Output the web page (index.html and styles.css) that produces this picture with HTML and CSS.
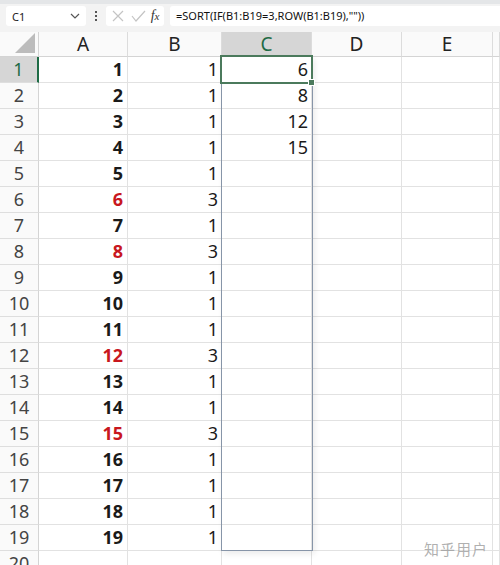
FILE: index.html
```html
<!DOCTYPE html>
<html lang="en">
<head>
    <meta charset="UTF-8">
    <title>Sheet</title>
    <link rel="stylesheet" href="styles.css">
</head>
<body>
    <div class="topstrip"></div>
    <div class="formulabar">
        <div class="namebox">
            <span>C1</span>
            <svg class="chev" width="10" height="6" viewBox="0 0 10 6"><path d="M1 1l4 4 4-4" fill="none" stroke="#555" stroke-width="1.2"/></svg>
        </div>
        <div class="dots"><i></i><i></i><i></i></div>
        <div class="btns">
            <svg width="14" height="14" viewBox="0 0 14 14"><path d="M2 2l10 10M12 2L2 12" stroke="#c4c4c4" stroke-width="1.2"/></svg>
            <svg width="16" height="14" viewBox="0 0 16 14"><path d="M2 7l4 5 9-10" fill="none" stroke="#c4c4c4" stroke-width="1.2"/></svg>
            <span class="fx"><i>f</i><i>x</i></span>
        </div>
        <div class="formula">=SORT(IF(B1:B19=3,ROW(B1:B19),""))</div>
    </div>

    <div class="sheet">
        <div class="grid" id="grid">
            <div class="corner"><span></span></div>
            <div class="colhead">A</div>
            <div class="colhead">B</div>
            <div class="colhead active">C</div>
            <div class="colhead">D</div>
            <div class="colhead">E</div>
            <div class="colhead last"></div>
        </div>
        <div class="range"></div>
        <div class="selected"><span class="handle"></span></div>
        <div class="watermark">知乎用户</div>
    </div>

    <script>
        var aRed = [6, 8, 12, 15];
        var cVals = [6, 8, 12, 15];
        var grid = document.getElementById("grid");
        var html = "";
        for (var r = 1; r <= 20; r++) {
            var red = aRed.indexOf(r) >= 0;
            html += '<div class="rowhead' + (r === 1 ? ' active' : '') + '">' + r + '</div>';
            html += '<div class="cell bold' + (red ? ' red' : '') + '">' + (r < 20 ? r : '') + '</div>';
            html += '<div class="cell">' + (r < 20 ? (red ? 3 : 1) : '') + '</div>';
            html += '<div class="cell">' + (r <= 4 ? cVals[r - 1] : '') + '</div>';
            html += '<div class="cell"></div><div class="cell"></div><div class="cell last"></div>';
        }
        grid.innerHTML += html;
    </script>
</body>
</html>
```

FILE: styles.css
```css
body {
    margin: 0;
    width: 500px;
    height: 565px;
    overflow: hidden;
    background: #fff;
    font-family: "Noto Sans", "Open Sans", sans-serif;
    color: #111;
}

.topstrip {
    height: 4px;
    background: #e4e6e8;
}

.formulabar {
    display: flex;
    align-items: center;
    height: 28px;
    padding: 0 0 4px 6px;
    box-sizing: border-box;
    background: #f3f3f3;
    gap: 6px;
}

.namebox {
    width: 80px;
    height: 20px;
    background: #fff;
    border-radius: 3px;
    display: flex;
    align-items: center;
    justify-content: space-between;
    padding: 0 6px 0 6px;
    box-sizing: border-box;
    font-size: 11px;
    color: #222;
}

.dots {
    display: flex;
    flex-direction: column;
    gap: 2px;
    padding: 0 3px;
}

.dots i {
    width: 2px;
    height: 2px;
    background: #555;
    display: block;
}

.btns {
    width: 58px;
    height: 20px;
    background: #fff;
    border-radius: 3px;
    display: flex;
    align-items: center;
    justify-content: space-around;
    padding: 0 2px;
    box-sizing: border-box;
}

.fx {
    font-family: "Liberation Serif", serif;
    font-style: italic;
    font-size: 14px;
    color: #333;
}

.fx i:last-child {
    font-size: 11px;
}

.formula {
    flex: 1;
    height: 20px;
    background: #fff;
    border-radius: 3px 0 0 3px;
    font-size: 11px;
    line-height: 20px;
    padding-left: 6px;
    color: #111;
}

.sheet {
    position: relative;
}

.grid {
    display: grid;
    grid-template-columns: 39px 89px 94px 90px 90px 91px 7px;
    grid-auto-rows: 26px;
    grid-template-rows: 25px;
}

.corner {
    background: #fafafa;
    border-right: 1px solid #d4d4d4;
    border-bottom: 1px solid #d4d4d4;
    position: relative;
}

.corner span {
    position: absolute;
    right: 3px;
    bottom: 3px;
    width: 0;
    height: 0;
    border-left: 20px solid transparent;
    border-bottom: 20px solid #bcbcbc;
}

.colhead {
    background: #fafafa;
    border-right: 1px solid #dcdcdc;
    border-bottom: 1px solid #d4d4d4;
    text-align: center;
    font-size: 19px;
    line-height: 25px;
    color: #222;
}

.colhead.active {
    background: #d6d6d6;
    color: #1e6b45;
    border-bottom: 2px solid #1e6b45;
}

.rowhead {
    background: #fafafa;
    border-right: 1px solid #d4d4d4;
    border-bottom: 1px solid #dedede;
    text-align: center;
    font-size: 18px;
    line-height: 25px;
    color: #444;
}

.rowhead.active {
    background: #d6d6d6;
    color: #1e6b45;
    border-right: 2px solid #1e6b45;
}

.cell {
    border-right: 1px solid #e2e2e2;
    border-bottom: 1px solid #e2e2e2;
    text-align: right;
    padding-right: 3px;
    font-size: 18px;
    line-height: 25px;
    color: #1a1a1a;
}

.cell.bold {
    font-weight: bold;
    padding-right: 4px;
}

.cell.red {
    color: #c8171e;
}

.range {
    position: absolute;
    left: 221px;
    top: 24px;
    width: 90px;
    height: 493px;
    border: 1px solid #8795a8;
    box-shadow: 2px 3px 6px rgba(0, 0, 0, 0.08);
    pointer-events: none;
}

.selected {
    position: absolute;
    left: 221px;
    top: 24px;
    width: 89px;
    height: 25px;
    border: 2px solid #4b7a5c;
    box-sizing: content-box;
    margin: -1px 0 0 -1px;
}

.handle {
    position: absolute;
    right: -4px;
    bottom: -4px;
    width: 5px;
    height: 5px;
    background: #4b7a5c;
    border: 1px solid #fff;
}

.watermark {
    position: absolute;
    left: 424px;
    top: 506px;
    font-family: "Noto Sans CJK SC", sans-serif;
    font-size: 15px;
    color: rgba(150, 150, 150, 0.75);
    letter-spacing: 1px;
}
```
